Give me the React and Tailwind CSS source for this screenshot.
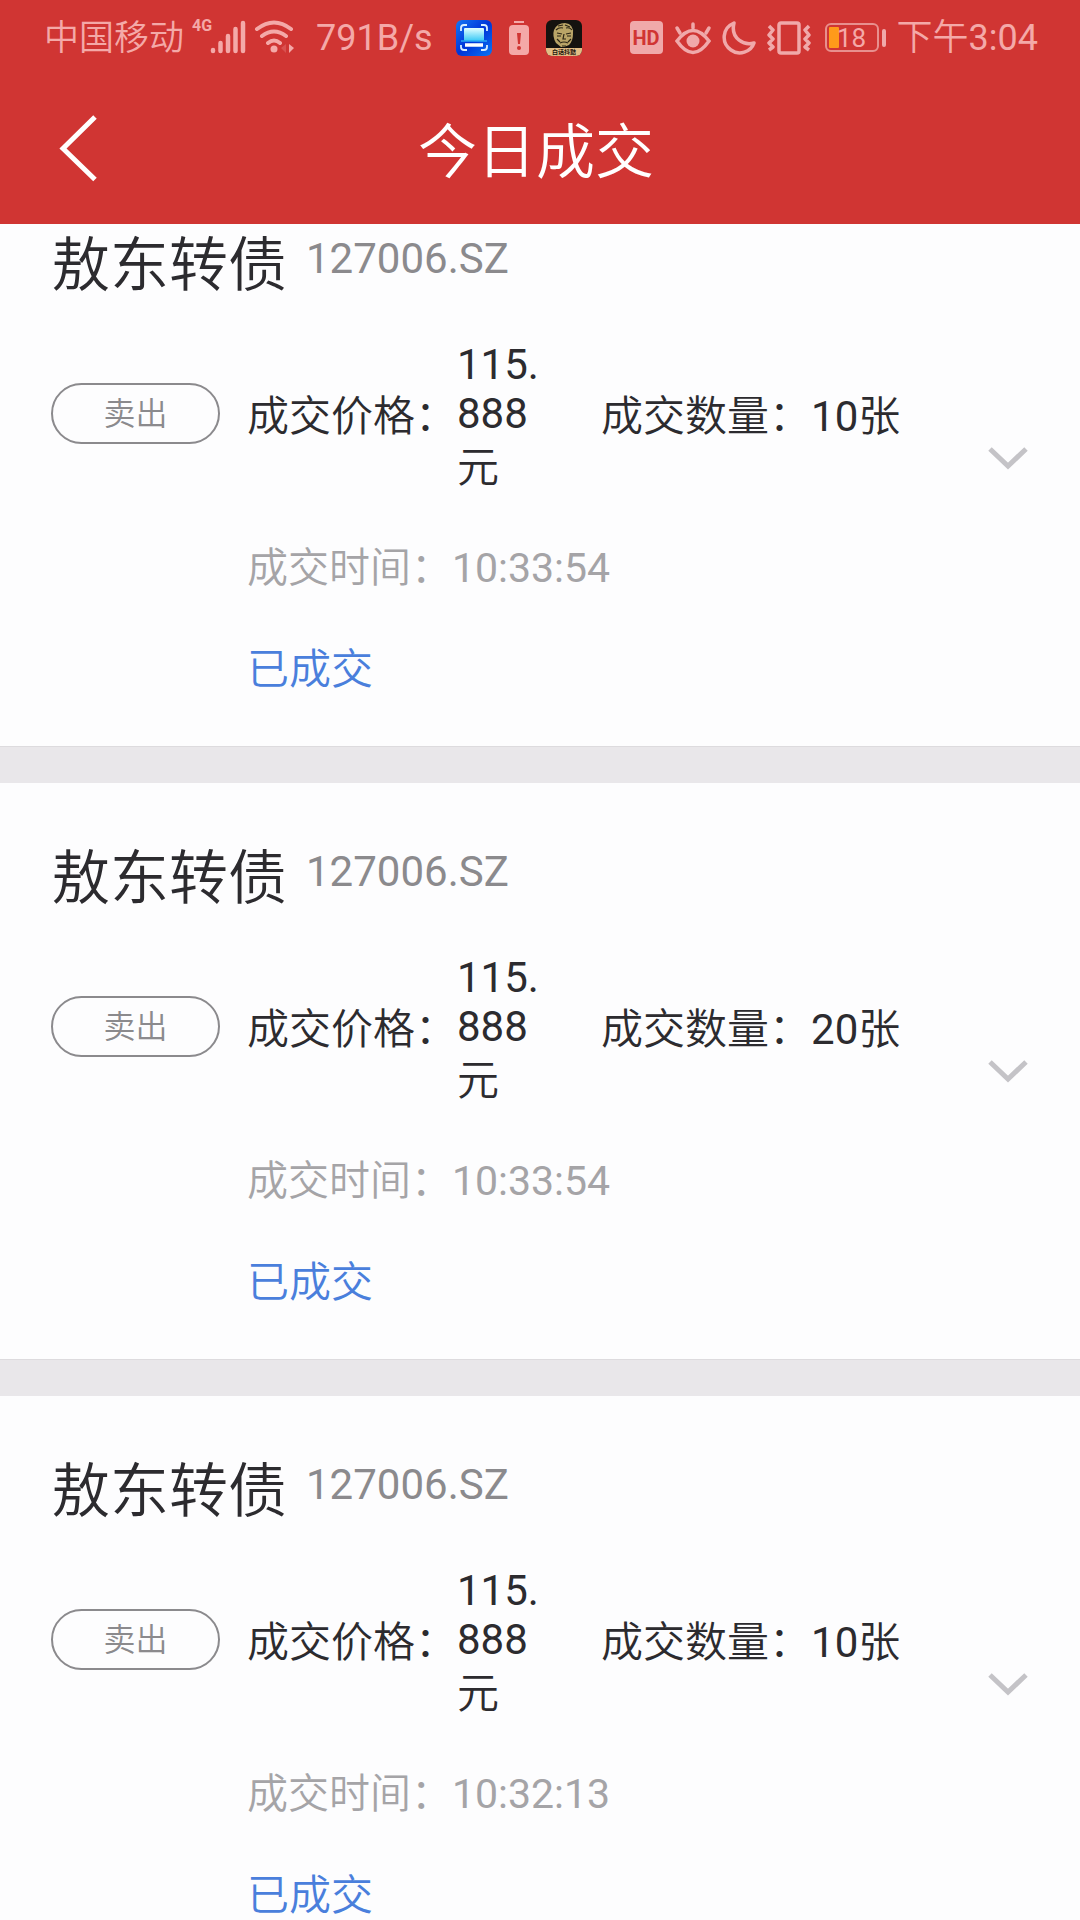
import { useLayoutEffect, useRef } from "react";

const trades = [
  { id: 1, name: "敖东转债", code: "127006.SZ", side: "卖出", price: "115.888", qty: 10, time: "10:33:54", status: "已成交" },
  { id: 2, name: "敖东转债", code: "127006.SZ", side: "卖出", price: "115.888", qty: 20, time: "10:33:54", status: "已成交" },
  { id: 3, name: "敖东转债", code: "127006.SZ", side: "卖出", price: "115.888", qty: 10, time: "10:32:13", status: "已成交" },
];

export default function App() {
  const listRef = useRef(null);

  useLayoutEffect(() => {
    listRef.current.scrollTop = 54;
  }, []);

  return (
    <div className="flex h-screen flex-col overflow-hidden bg-[#fdfdfe] font-['Roboto','Noto_Sans_CJK_SC',sans-serif] text-[#2c2b2f]">
      <header className="shrink-0 bg-[#d03533]">
        <StatusBar />
        <div className="flex h-[149px] items-center pr-[68px] pb-[2px] pl-[56px]">
          <button type="button" aria-label="返回" className="shrink-0">
            <svg width="44" height="70" viewBox="0 0 44 70" fill="none" stroke="#fff" strokeWidth="5">
              <path d="M39 3 7 34.500l32 31" />
            </svg>
          </button>
          <h1 className="flex-1 pt-2 pr-[40px] text-center text-[59px] leading-[80px] font-[350] text-white">今日成交</h1>
        </div>
      </header>

      <main ref={listRef} className="min-h-0 flex-1 overflow-y-auto [scrollbar-width:none]">
        {trades.map((t) => (
          <TradeCard key={t.id} trade={t} />
        ))}
      </main>
    </div>
  );
}

function TradeCard({ trade }) {
  return (
    <section>
      <div className="flex items-center pt-[52px] pr-[48px] pb-[46px] pl-[51px]">
        <div className="flex-1">
          <div className="flex items-start gap-[19px]">
            <h2 className="text-[59px] leading-[88px] font-[350]">{trade.name}</h2>
            <span className="text-[42px] leading-[74px] text-[#8b8a8d]">{trade.code}</span>
          </div>

          <div className="mt-[30px] flex items-start text-[42px] leading-[49px]">
            <span className="mt-[43px] mr-[27px] flex h-[61px] w-[169px] shrink-0 items-center justify-center rounded-full border-2 border-[#8b8a8d] pt-[2px] text-[32px] font-[350] text-[#8b8a8d]">
              {trade.side}
            </span>
            <span className="mt-[52px] shrink-0 font-[350]">成交价格：</span>
            <span className="mr-[44px] w-[100px] shrink-0 break-all">
              {trade.price}
              <span className="block leading-[60px] font-[350]">元</span>
            </span>
            <span className="mt-[52px] font-[350]">成交数量：</span>
            <span className="mt-[52px]">
              {trade.qty}
              <span className="font-[350]">张</span>
            </span>
          </div>

          <p className="mt-10 pl-[196px] text-[41px] leading-[60px] text-[#a5a4a7]">
            <span className="font-[350]">成交时间：</span>
            {trade.time}
          </p>
          <p className="mt-[42px] pl-[196px] text-[42px] leading-[60px] font-[350] text-[#4a7fdc]">{trade.status}</p>
        </div>

        <button type="button" aria-label="展开" className="shrink-0">
          <svg width="48" height="32" viewBox="0 0 48 32" fill="none" stroke="#c4c3c7" strokeWidth="5">
            <path d="m6 4 18 17L42 4" />
          </svg>
        </button>
      </div>
      <div className="h-[37px] border-t border-[#dddbde] bg-[#e9e7ea]" />
    </section>
  );
}

function StatusBar() {
  return (
    <div className="flex h-[75px] items-center justify-between pr-[42px] pl-[44px] text-[#f4a9a8]">
      <div className="flex h-full items-center">
        <span className="pt-[3px] text-[35px] font-[350]">中国移动</span>
        <span className="ml-[8px] w-[18px] self-start pt-[14px] text-[16px] leading-[24px] font-bold">4G</span>
        <SignalIcon />
        <WifiIcon />
        <span className="ml-[20px] text-[36px]">791B/s</span>
        <ScanAppIcon />
        <BatteryAlertIcon />
        <PortraitAppIcon />
      </div>
      <div className="flex items-center">
        <span className="flex size-[33px] items-center justify-center rounded-[4px] bg-[#f0a9aa] text-[20px] font-bold text-[#d03533]">HD</span>
        <EyeIcon />
        <MoonIcon />
        <VibrateIcon />
        <Battery level={18} />
        <span className="ml-[11px] text-[36px]">
          <span className="font-[350]">下午</span>3:04
        </span>
      </div>
    </div>
  );
}

function SignalIcon() {
  return (
    <svg className="mt-[-2px]" width="36" height="34" viewBox="0 0 36 34" stroke="currentColor" strokeWidth="4.500" strokeLinecap="round">
      <path d="M3 30v1M10.500 23v8M18 16v15M25.500 9v22M33 3v28" />
    </svg>
  );
}

function WifiIcon() {
  return (
    <svg className="ml-[8px]" width="42" height="36" viewBox="0 0 42 36" fill="none" stroke="currentColor" strokeWidth="4" strokeLinecap="round">
      <path d="M3 9q17-13 34 0M8 16q12-9 24 0M14 23q6-5 12 0" />
      <circle cx="20" cy="29" r="3.500" fill="currentColor" stroke="none" />
      <path d="M35 24v9l5-5z" fill="currentColor" stroke="none" />
      <path d="M32 24v9l-5-5z" fill="currentColor" stroke="none" opacity=".25" />
    </svg>
  );
}

function ScanAppIcon() {
  return (
    <svg className="ml-[23px]" width="36" height="36" viewBox="0 0 36 36" fill="none">
      <defs>
        <linearGradient id="scanBg" x1="0" y1="0" x2="1" y2="1">
          <stop offset="0" stopColor="#1478f5" />
          <stop offset=".5" stopColor="#0034d8" />
          <stop offset="1" stopColor="#0876f4" />
        </linearGradient>
        <linearGradient id="scanDoc" x1="0" y1="0" x2="0" y2="1">
          <stop offset="0" stopColor="#e4ffff" />
          <stop offset="1" stopColor="#36c8f6" />
        </linearGradient>
      </defs>
      <rect width="36" height="36" rx="6" fill="url(#scanBg)" />
      <rect x="8" y="8" width="20" height="13" rx="1" fill="url(#scanDoc)" />
      <path d="M5 21h26" stroke="#2ba8f5" strokeWidth="1.500" />
      <path d="M9 25h18" stroke="#fff" strokeWidth="3.500" />
      <path d="M5 11V8q0-3 3-3h3M25 5h3q3 0 3 3v3M5 25v2q0 3 3 3h3M25 30h3q3 0 3-3v-2" stroke="#d8eeff" strokeWidth="1.800" />
    </svg>
  );
}

function BatteryAlertIcon() {
  return (
    <svg className="ml-[17px]" width="20" height="36" viewBox="0 0 20 36">
      <path d="M5 1h10v2H5z" fill="currentColor" />
      <rect x="0" y="5" width="20" height="30" rx="4" fill="currentColor" />
      <path d="M8 13h4l-1 11H9z" fill="#d03533" />
      <circle cx="10" cy="28" r="2" fill="#d03533" />
    </svg>
  );
}

function PortraitAppIcon() {
  return (
    <svg className="ml-[17px]" width="36" height="36" viewBox="0 0 36 36">
      <rect width="36" height="36" rx="6" fill="#15120f" />
      <path d="M8 10q3-7 11-7 9 1 8 11 0 7-4 11l-5 2h-3l-5-4Q6 16 8 10z" fill="#b9a467" />
      <path d="M10 10q3-3 7-2M20 8q4-1 6 2M11 13l5 1M20 14l5-1M11 16h4M21 16h4M18 14l-1 5h3M14 23q4-2 8 0M11 19l3 3M25 19l-3 3M12 6l5-1M19 5l5 2M16 26h4" fill="none" stroke="#2b2414" strokeWidth="1.200" />
      <path d="M0 28h36v2a6 6 0 0 1-6 6H6a6 6 0 0 1-6-6z" fill="#e3bd85" />
      <text x="18" y="34" textAnchor="middle" fontSize="6" fontWeight="700" fill="#1c140c">白话抖黠</text>
    </svg>
  );
}

function EyeIcon() {
  return (
    <svg className="ml-[11px]" width="38" height="34" viewBox="0 0 38 34" fill="none" stroke="#f0a9aa" strokeWidth="3.500" strokeLinecap="round">
      <path d="M3 20q16-21 32 0-16 23-32 0z" />
      <circle cx="19" cy="20" r="6.500" fill="#f0a9aa" stroke="none" />
      <path d="M19 7V3M6 12 3 7M32 12l3-5" />
    </svg>
  );
}

function MoonIcon() {
  return (
    <svg className="ml-[10px]" width="34" height="34" viewBox="0 0 34 34" fill="none" stroke="#f0a9aa" strokeWidth="3.500" strokeLinejoin="round">
      <path d="M12 2C0 7-1 22 9 29c8 6 20 2 23-7-9 3-24-4-20-20z" />
    </svg>
  );
}

function VibrateIcon() {
  return (
    <svg className="ml-[11px]" width="44" height="34" viewBox="0 0 44 34" fill="none" stroke="#f0a9aa" strokeWidth="3.500" strokeLinejoin="round">
      <rect x="12" y="2" width="20" height="30" rx="2" />
      <path d="m2 5 4 4-4 5 4 4-4 4 4 4-4 3M42 5l-4 4 4 5-4 4 4 4-4 4 4 3" />
    </svg>
  );
}

function Battery({ level }) {
  return (
    <div className="ml-[14px] flex items-center gap-[3px]">
      <div className="relative flex h-[29px] w-[54px] items-center rounded-[6px] border-2 border-[#e8908e] p-[2px]">
        <div className="h-[21px] rounded-[1px] bg-[#ff9a1a]" style={{ width: `${level + 4}%` }} />
        <span className="absolute inset-x-0 text-center text-[26px] leading-[26px]">{level}</span>
      </div>
      <div className="h-[18px] w-[4px] rounded-full bg-[#f0a9aa]" />
    </div>
  );
}
